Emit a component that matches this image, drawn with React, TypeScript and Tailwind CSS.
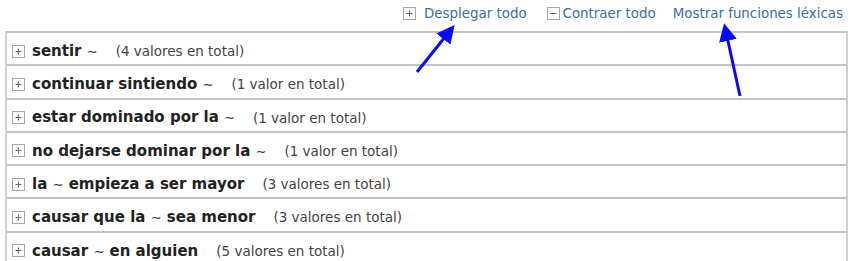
import React from "react";

interface Entry {
  label: React.ReactNode;
  count: string;
}

const T = () => <span className="text-[13px] font-normal text-[#333]">∼</span>;

const entries: Entry[] = [
  { label: <>sentir <T /></>, count: "(4 valores en total)" },
  { label: <>continuar sintiendo <T /></>, count: "(1 valor en total)" },
  { label: <>estar dominado por la <T /></>, count: "(1 valor en total)" },
  { label: <>no dejarse dominar por la <T /></>, count: "(1 valor en total)" },
  { label: <>la <T /> empieza a ser mayor</>, count: "(3 valores en total)" },
  { label: <>causar que la <T /> sea menor</>, count: "(3 valores en total)" },
  { label: <>causar <T /> en alguien</>, count: "(5 valores en total)" },
];

const BoxIcon = ({ minus }: { minus?: boolean }) => (
  <svg width="13" height="13" viewBox="0 0 13 13" className="shrink-0">
    <rect x="0.5" y="0.5" width="12" height="12" fill="white" stroke="#a8a8a8" />
    <line x1="3.5" y1="6.5" x2="9.5" y2="6.5" stroke="#666" />
    {!minus && <line x1="6.5" y1="3.5" x2="6.5" y2="9.5" stroke="#666" />}
  </svg>
);

export default function App() {
  return (
    <div
      className="relative w-[851px] h-[261px] overflow-hidden bg-white"
      style={{ fontFamily: '"DejaVu Sans", Verdana, sans-serif' }}
    >
      <div className="flex justify-end items-center h-[31px] pr-[8px] pb-[3px] text-[13.4px] text-[#3a6cb0]">
        <span className="flex items-center">
          <BoxIcon />
          <span className="ml-[8px]">Desplegar todo</span>
        </span>
        <span className="flex items-center ml-[20px]">
          <BoxIcon minus />
          <span className="ml-[3px]">Contraer todo</span>
        </span>
        <span className="ml-[17px]">Mostrar funciones léxicas</span>
      </div>

      <div className="ml-[5px] mr-[3px] border-l-2 border-r-2 border-[#cfcfcf]">
        {entries.map((e, i) => (
          <div
            key={i}
            className="h-[33.3px] border-t-2 border-[#c4c4c4] flex items-end pb-[2px] pl-[5px]"
          >
            <div className="flex items-center">
              <BoxIcon />
              <span className="ml-[7px] text-[15px] font-bold text-[#222]">{e.label}</span>
              <span className="ml-[18px] text-[13.5px] text-[#444]">{e.count}</span>
            </div>
          </div>
        ))}
      </div>

      <svg className="absolute inset-0 pointer-events-none" width="851" height="261">
        <defs>
          <marker id="ah" markerWidth="6" markerHeight="6" refX="3" refY="3" orient="auto">
            <path d="M0,0 L6,3 L0,6 z" fill="#0a0aff" />
          </marker>
        </defs>
        <line x1="417" y1="72" x2="449" y2="32" stroke="#0a0aff" strokeWidth="3" markerEnd="url(#ah)" />
        <line x1="740" y1="96" x2="726" y2="32" stroke="#0a0aff" strokeWidth="3" markerEnd="url(#ah)" />
      </svg>
    </div>
  );
}
